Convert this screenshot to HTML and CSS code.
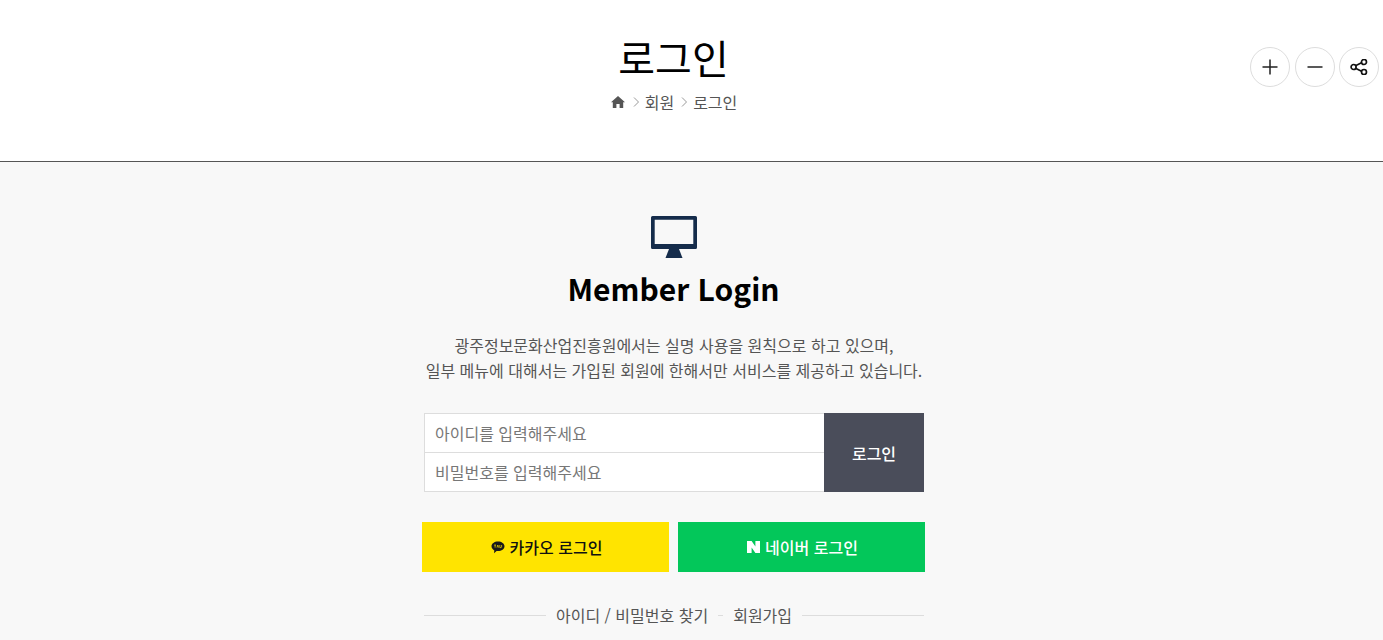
FILE: index.html
```html
<!DOCTYPE html>
<html lang="ko">

<head>
  <meta charset="UTF-8" />
  <title>로그인</title>
  <link rel="stylesheet" href="styles.css">
</head>

<body>

  <header class="top">
    <div class="top-in">
      <h1 class="title">로그인</h1>
      <div class="crumb">
        <svg class="home" viewBox="0 0 14 12" width="14" height="12">
          <path d="M7 0 L14 6.2 L12.2 6.2 L12.2 12 L8.6 12 L8.6 8 L5.4 8 L5.4 12 L1.8 12 L1.8 6.2 L0 6.2 Z" fill="#555" />
        </svg>
        <svg class="arr" viewBox="0 0 6 10" width="6" height="10">
          <path d="M1 .5 L5.5 5 L1 9.5" fill="none" stroke="#999" />
        </svg>
        <span class="mid">회원</span>
        <svg class="arr" viewBox="0 0 6 10" width="6" height="10">
          <path d="M1 .5 L5.5 5 L1 9.5" fill="none" stroke="#999" />
        </svg>
        <span>로그인</span>
      </div>
    </div>

    <div class="tools">
      <button class="tool">
        <svg viewBox="0 0 16 16" width="16" height="16">
          <path d="M8 0.5 V15.5 M0.5 8 H15.5" stroke="#222" stroke-width="1.5" fill="none" />
        </svg>
      </button>
      <button class="tool">
        <svg viewBox="0 0 16 16" width="16" height="16">
          <path d="M0.5 8 H15.5" stroke="#222" stroke-width="1.5" fill="none" />
        </svg>
      </button>
      <button class="tool">
        <svg viewBox="0 0 18 16" width="18" height="16">
          <path d="M5 7 L12 3.6 M5 9 L12 12.4" stroke="#111" stroke-width="1.7" fill="none" />
          <circle cx="3.6" cy="8" r="2.5" stroke="#111" stroke-width="1.7" fill="#fff" />
          <circle cx="14" cy="3" r="2.5" stroke="#111" stroke-width="1.7" fill="#fff" />
          <circle cx="14" cy="13" r="2.5" stroke="#111" stroke-width="1.7" fill="#fff" />
        </svg>
      </button>
    </div>
  </header>

  <main class="sec">
    <div class="login">
      <svg class="mon" viewBox="0 0 46 42" width="46" height="42">
        <path d="M1.5 0 H44.5 Q46 0 46 1.5 V31.5 Q46 33 44.5 33 H1.5 Q0 33 0 31.5 V1.5 Q0 0 1.5 0 Z M3.7 3.7 V28 H42.3 V3.7 Z" fill="#152c4b" fill-rule="evenodd" />
        <path d="M18 33 H28 L31.5 42 H14.5 Z" fill="#152c4b" />
      </svg>
      <h2 class="head">Member Login</h2>
      <p class="desc">광주정보문화산업진흥원에서는 실명 사용을 원칙으로 하고 있으며,<br>일부 메뉴에 대해서는 가입된 회원에 한해서만 서비스를 제공하고 있습니다.</p>

      <form class="form">
        <div class="inputs">
          <input type="text" placeholder="아이디를 입력해주세요">
          <input type="password" placeholder="비밀번호를 입력해주세요">
        </div>
        <button type="button" class="go">로그인</button>
      </form>

      <div class="social">
        <a href="#" class="btn kakao">
          <svg viewBox="0 0 14 13" width="14" height="13">
            <path d="M7 0.5 C10.6 0.5 13.5 2.6 13.5 5.3 C13.5 8 10.6 10.1 7 10.1 C6.5 10.1 6 10.1 5.6 10 L3 12.2 L3.3 9.4 C1.6 8.5 0.5 7 0.5 5.3 C0.5 2.6 3.4 0.5 7 0.5 Z" fill="#1a1a1a" />
            <path d="M3.2 4 H5 M4.1 4 V6.6 M6 6.6 L6.8 4 L7.6 6.6 M8.8 4 V6.6 H10 M10.6 4 V6.6" stroke="#ffe400" stroke-width=".7" fill="none" />
          </svg>
          카카오 로그인
        </a>
        <a href="#" class="btn naver">
          <svg viewBox="0 0 13 12" width="13" height="12">
            <path d="M0 0 H4.6 L8.4 5.6 V0 H13 V12 H8.4 L4.6 6.4 V12 H0 Z" fill="#fff" />
          </svg>
          네이버 로그인
        </a>
      </div>

      <div class="links">
        <span class="line"></span>
        <a href="#">아이디 / 비밀번호 찾기</a>
        <span class="dash"></span>
        <a href="#">회원가입</a>
        <span class="line"></span>
      </div>
    </div>
  </main>

</body>

</html>
```

FILE: styles.css
```css
* {
  box-sizing: border-box;
}

html,
body {
  height: 640px;
  overflow: hidden;
}

body {
  margin: 0;
  font-family: "Noto Sans CJK KR", "Noto Sans", sans-serif;
  color: #555;
  background: #f8f8f8;
}

a {
  color: inherit;
  text-decoration: none;
}

.top {
  position: relative;
  height: 162px;
  background: #fff;
  border-bottom: 1px solid #555;
}

.top-in {
  padding: 29px 35px 0 0;
  text-align: center;
}

.title {
  margin: 0;
  padding-right: 1px;
  font-size: 40px;
  font-weight: 400;
  line-height: 56px;
  color: #000;
}

.crumb {
  display: flex;
  justify-content: center;
  align-items: center;
  gap: 6px;
  margin-top: 4px;
  font-size: 16px;
  line-height: 26px;
}

.home {
  margin-right: 2px;
}

.mid {
  margin-right: 1px;
}

.tools {
  position: absolute;
  top: 47px;
  right: 4px;
  display: flex;
  gap: 4px;
}

.tool {
  display: flex;
  align-items: center;
  justify-content: center;
  width: 40px;
  height: 40px;
  padding: 0;
  background: #fff;
  border: 1px solid #ddd;
  border-radius: 50%;
}

.tool:first-child {
  margin-right: 1px;
}

.sec {
  padding: 54px 35px 0 0;
}

.login {
  width: 500px;
  margin: 0 auto;
  text-align: center;
}

.mon {
  display: block;
  margin: 0 auto;
}

.head {
  margin: 7px 0 0;
  padding-right: 1px;
  font-size: 30px;
  font-weight: 700;
  line-height: 46px;
  color: #000;
}

.desc {
  margin: 22px -10px 0;
  font-size: 16px;
  line-height: 25px;
}

.form {
  display: flex;
  margin-top: 30px;
}

.inputs {
  flex: 1;
  display: flex;
  flex-direction: column;
}

.inputs input {
  width: 100%;
  height: 40px;
  padding: 0 10px;
  font-family: inherit;
  font-size: 16px;
  color: #555;
  background: #fff;
  border: 1px solid #ddd;
  border-right: 0;
  border-radius: 0;
  outline: 0;
}

.inputs input + input {
  height: 40px;
  margin-top: -1px;
}

.inputs input::placeholder {
  color: #777;
  opacity: 1;
}

.go {
  width: 100px;
  height: 79px;
  padding: 0;
  font-family: inherit;
  font-size: 16px;
  font-weight: 500;
  color: #fff;
  background: #4a4d5a;
  border: 0;
}

.social {
  display: grid;
  grid-template-columns: 247px 247px;
  gap: 9px;
  margin: 30px -1px 0 -2px;
}

.btn {
  display: flex;
  align-items: center;
  justify-content: center;
  gap: 5px;
  height: 50px;
  padding-left: 2px;
  font-size: 16px;
  font-weight: 500;
}

.kakao {
  color: #111;
  background: #ffe400;
}

.naver {
  color: #fff;
  background: #03c75a;
}

.links {
  display: flex;
  align-items: center;
  margin-top: 30px;
  font-size: 16px;
  line-height: 26px;
}

.line {
  flex: 1;
  height: 1px;
  background: #ddd;
}

.links a {
  margin: 0 10px;
}

.dash {
  width: 5px;
  height: 1px;
  background: #ddd;
}
```
